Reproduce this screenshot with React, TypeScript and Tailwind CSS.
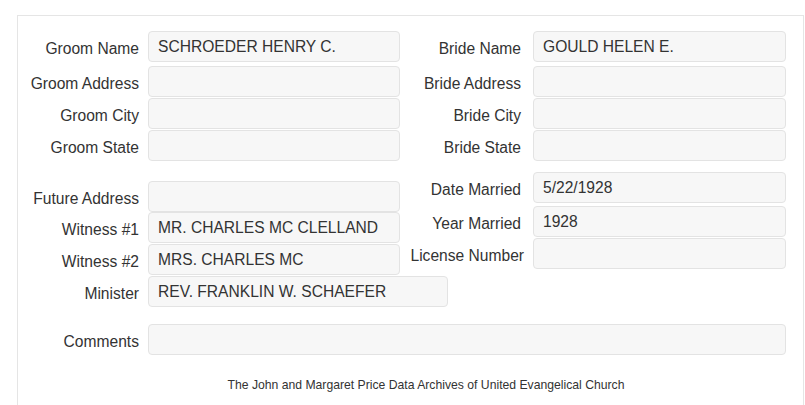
const font = { fontFamily: '"Liberation Sans", Arial, sans-serif' };

type Field = { label: string; value?: string; mt: string; wide?: boolean; labelPr?: string };

const FieldRow = ({
  field,
  labelW,
  inputW,
}: {
  field: Field;
  labelW: string;
  inputW: string;
}) => {
  return (
    <div className={`flex items-center ${field.mt}`}>
      <div
        className={`${labelW} ${field.labelPr || "pr-[9px]"} shrink-0 whitespace-nowrap pt-[4px] text-right text-[15.6px] text-[#333]`}
      >
        {field.label}
      </div>
      <div
        className={`${field.wide ? "w-[300px]" : inputW} flex h-[31px] shrink-0 items-center rounded-[4px] border border-[#e3e3e3] bg-[#f7f7f7] px-[9px] pt-[1px] text-[15.6px] text-[#333]`}
      >
        {field.value}
      </div>
    </div>
  );
};

const groom: Field[] = [
  { label: "Groom Name", value: "SCHROEDER HENRY C.", mt: "mt-0" },
  { label: "Groom Address", mt: "mt-[4px]" },
  { label: "Groom City", mt: "mt-[1px]" },
  { label: "Groom State", mt: "mt-[1px]" },
];

const bride: Field[] = [
  { label: "Bride Name", value: "GOULD HELEN E.", mt: "mt-0" },
  { label: "Bride Address", mt: "mt-[4px]" },
  { label: "Bride City", mt: "mt-[1px]" },
  { label: "Bride State", mt: "mt-[1px]" },
];

const other: Field[] = [
  { label: "Future Address", mt: "mt-[20px]" },
  { label: "Witness #1", value: "MR. CHARLES MC CLELLAND", mt: "mt-0" },
  { label: "Witness #2", value: "MRS. CHARLES MC", mt: "mt-[1px]" },
  { label: "Minister", value: "REV. FRANKLIN W. SCHAEFER", mt: "mt-[1px]", wide: true },
];

const married: Field[] = [
  { label: "Date Married", value: "5/22/1928", mt: "mt-[11px]", labelPr: "pr-[12px]" },
  { label: "Year Married", value: "1928", mt: "mt-[3px]", labelPr: "pr-[12px]" },
  { label: "License Number", mt: "mt-[1px]", labelPr: "pr-[9px]" },
];

export default function App() {
  return (
    <div className="min-h-[405px] bg-white pl-[17px] pt-[15px]" style={font}>
      <div className="h-[400px] w-[787px] border border-[#e5e5e5] pt-[15px]">
        <div className="flex">
          <div className="flex flex-col">
            {groom.map((f) => (
              <FieldRow key={f.label} field={f} labelW="w-[130px]" inputW="w-[252px]" />
            ))}
          </div>
          <div className="flex flex-col">
            {bride.map((f) => (
              <FieldRow
                key={f.label}
                field={{ ...f, labelPr: "pr-[12px]" }}
                labelW="w-[133px]"
                inputW="w-[253px]"
              />
            ))}
          </div>
        </div>
        <div className="flex">
          <div className="flex flex-col">
            {other.map((f) => (
              <FieldRow key={f.label} field={f} labelW="w-[130px]" inputW="w-[252px]" />
            ))}
          </div>
          <div className="ml-[-48px] flex flex-col">
            {married.map((f) => (
              <FieldRow key={f.label} field={f} labelW="w-[133px]" inputW="w-[253px]" />
            ))}
          </div>
        </div>
        <FieldRow
          field={{ label: "Comments", mt: "mt-[17px]" }}
          labelW="w-[130px]"
          inputW="w-[638px]"
        />
        <div className="mt-[21px] pl-[31px] text-center text-[12.2px] text-[#333]">
          The John and Margaret Price Data Archives of United Evangelical Church
        </div>
      </div>
    </div>
  );
}
